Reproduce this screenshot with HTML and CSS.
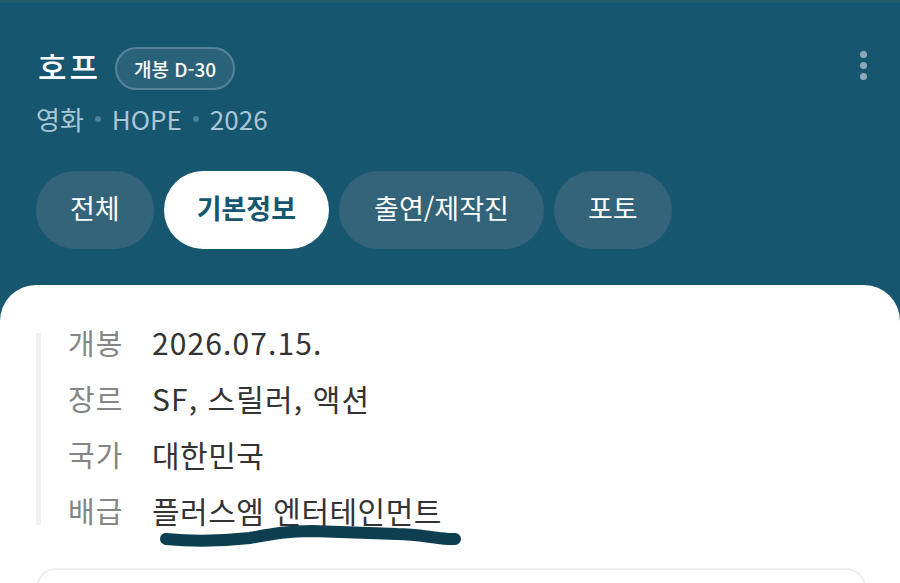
FILE: index.html
```html
<!DOCTYPE html>
<html lang="ko">
<head>
    <meta charset="UTF-8">
    <meta name="viewport" content="width=device-width, initial-scale=1.0">
    <title>호프 - 기본정보</title>
    <link rel="stylesheet" href="styles.css">
</head>
<body>

<header class="header">
    <div class="title-row">
        <h1 class="title">호프</h1>
        <span class="badge">개봉 D-30</span>
        <button class="more" aria-label="더보기">
            <i></i><i></i><i></i>
        </button>
    </div>
    <div class="sub">
        <span>영화</span><span class="dot"></span><span>HOPE</span><span class="dot"></span><span>2026</span>
    </div>
    <nav class="tabs">
        <a class="tab">전체</a>
        <a class="tab active">기본정보</a>
        <a class="tab wide">출연/제작진</a>
        <a class="tab">포토</a>
    </nav>
</header>

<main class="sheet">
    <dl class="info">
        <div class="info-row"><dt>개봉</dt><dd class="spaced">2026.07.15.</dd></div>
        <div class="info-row"><dt>장르</dt><dd class="spaced">SF, 스릴러, 액션</dd></div>
        <div class="info-row"><dt>국가</dt><dd>대한민국</dd></div>
        <div class="info-row">
            <dt>배급</dt>
            <dd class="marked">플러스엠 엔터테인먼트
                <!-- 손으로 그은 밑줄 -->
                <svg class="scribble" width="320" height="28" viewBox="0 0 320 28">
                    <path d="M14 14C45 17 70 16 98 13C120 9 135 6 160 6C190 7 215 8 245 9C265 9 280 13 296 14C300 14 302 14 303 14" fill="none" stroke="#0d3f50" stroke-width="12" stroke-linecap="round"/>
                </svg>
            </dd>
        </div>
    </dl>
    <div class="card"></div>
</main>

</body>
</html>
```

FILE: styles.css
```css
html, body {
    margin: 0;
    height: 583px;
    overflow: hidden;
}
body {
    font-family: "Noto Sans CJK KR", "Noto Sans", sans-serif;
    background-color: #17566f;
}
.header {
    box-sizing: border-box;
    height: 285px;
    padding: 44px 36px 0 36px;
    border-top: 3px solid #235a6c;
    color: white;
}
.title-row {
    display: flex;
    align-items: center;
    height: 43px;
}
.title {
    margin: -6px 14px 0 2px;
    font-size: 31px;
    font-weight: 500;
    line-height: 36px;
    letter-spacing: 3px;
}
.badge {
    display: flex;
    align-items: center;
    height: 39px;
    padding: 0 17px;
    border: 2px solid #55839a;
    border-radius: 22px;
    background-color: #2a6379;
    font-size: 19px;
    font-weight: 500;
}
.more {
    display: flex;
    flex-direction: column;
    gap: 4px;
    margin: -6px -3px 0 auto;
    padding: 0;
    border: none;
    background: none;
}
.more i {
    width: 7px;
    height: 7px;
    border-radius: 50%;
    background-color: #8fa9bb;
}
.sub {
    display: flex;
    align-items: center;
    gap: 11px;
    height: 36px;
    margin-top: 10px;
    font-size: 26px;
    color: #a9c6d6;
}
.dot {
    width: 6px;
    height: 6px;
    margin-top: 2px;
    border-radius: 50%;
    background-color: #4b8199;
}
.tabs {
    display: flex;
    gap: 10px;
    margin-top: 35px;
}
.tab {
    display: flex;
    align-items: center;
    box-sizing: border-box;
    height: 78px;
    padding: 0 34px 5px 34px;
    border-radius: 39px;
    background-color: #336479;
    font-size: 27px;
    white-space: nowrap;
}
.tab.active {
    padding: 0 33px 5px 33px;
    background-color: white;
    color: #17566f;
    font-weight: 700;
}
.tab.wide {
    padding: 0 35px 5px 35px;
}
.sheet {
    box-sizing: border-box;
    height: 298px;
    padding: 48px 34px 0 36px;
    border-radius: 36px 36px 0 0;
    background-color: white;
    overflow: hidden;
}
.info {
    display: flex;
    flex-direction: column;
    gap: 32px;
    margin: 0;
    border-left: 5px solid #eef2f6;
    padding-left: 27px;
}
.info-row {
    display: flex;
    align-items: center;
    height: 24px;
}
.info dt {
    width: 84px;
    margin-top: -6px;
    font-size: 29px;
    line-height: 24px;
    letter-spacing: 1px;
    color: #858585;
}
.info dd {
    margin: -6px 0 0 0;
    font-size: 30px;
    line-height: 24px;
    letter-spacing: 0.5px;
    color: #333;
    white-space: nowrap;
}
.info dd.spaced {
    letter-spacing: 1.1px;
}
.marked {
    position: relative;
}
.scribble {
    position: absolute;
    left: 0;
    top: 27px;
}
.card {
    height: 60px;
    margin-top: 43px;
    border: 2px solid #eee;
    border-radius: 20px;
}
```
